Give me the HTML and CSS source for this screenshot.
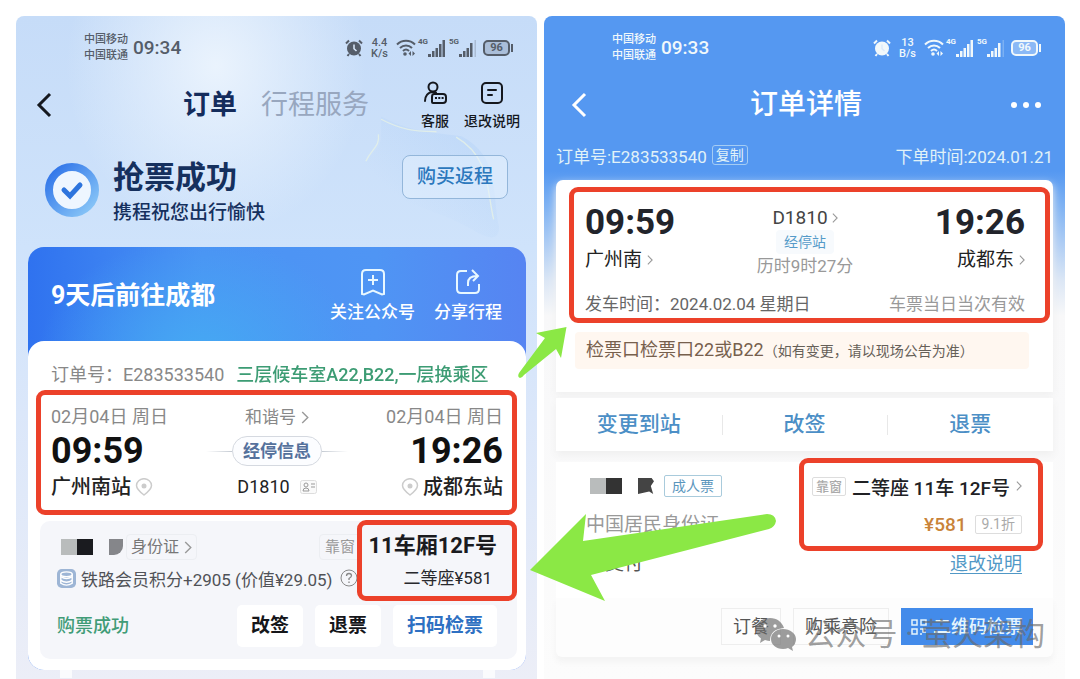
FILE: index.html
```html
<!DOCTYPE html>
<html lang="zh-CN">
<head>
<meta charset="utf-8">
<meta name="viewport" content="width=device-width, initial-scale=1">
<title>订单详情</title>
<link rel="stylesheet" href="styles.css">
</head>
<body>
<svg class="defs" aria-hidden="true">
  <symbol id="alarm" viewBox="0 0 18 18"><circle cx="9" cy="9.500" r="7" fill="currentColor"/><path d="M1 4.500 4 1.500M17 4.500 14 1.500M4 15l-1.500 2M14 15l1.500 2" stroke="currentColor" stroke-width="2"/><path class="hand" d="M9 5.500v4.200l2.500 2.300" fill="none" stroke-width="1.500"/></symbol>
  <symbol id="wifi" viewBox="0 0 20 18"><g fill="none" stroke="currentColor" stroke-width="2"><path d="M1 5.500c5-5 13-5 18 0M4 9c3.500-3.500 8.500-3.500 12 0M7 12c2-2 4-2 6 0"/></g><circle cx="9" cy="15" r="1.800" fill="currentColor"/><path d="m15 12-2.500 2.500L15 17zM16.500 12l2.500 2.500-2.500 2.500z" fill="currentColor"/></symbol>
  <symbol id="signal" viewBox="0 0 18 17"><path d="M0 14h3v3H0zM4 11h2.500v6H4zM7.500 8H10v9H7.500zM11 4h2.500v13H11zM14.500 0H17v17h-2.500z" fill="currentColor"/></symbol>
  <symbol id="signal4" viewBox="0 0 18 17"><path d="M0 14h3v3H0zM4 11h2.500v6H4zM7.500 8H10v9H7.500zM11 3h2.500v14H11z" fill="currentColor"/><path d="M15.500 0H17v17h-1.500z" fill="currentColor" opacity=".25"/></symbol>
  <symbol id="back" viewBox="0 0 16 26"><path d="M14 2 3 13l11 11" fill="none" stroke="currentColor" stroke-width="3"/></symbol>
  <symbol id="chev" viewBox="0 0 8 14"><path d="m1 1 6 6-6 6" fill="none" stroke="currentColor" stroke-width="1.500"/></symbol>
  <symbol id="pin" viewBox="0 0 18 18"><path d="M9 17C5 14 1.500 11 1.500 7.500a7.500 6.800 0 0 1 15 0C16.500 11 13 14 9 17z" fill="none" stroke="currentColor" stroke-width="1.500"/><circle cx="9" cy="8" r="2.500" fill="currentColor"/></symbol>
</svg>

<main class="board">
  <section class="phone phone-a">
    <svg class="petal" viewBox="0 0 170 150" aria-hidden="true"><defs><linearGradient id="leaf" x1="0" y1="1" x2="1" y2="0"><stop offset=".3" stop-color="#a9ccf7" stop-opacity="0"/><stop offset="1" stop-color="#a9ccf7" stop-opacity=".4"/></linearGradient></defs><path d="M28 4c35 18 60 18 90 22 42 22 34 60 42 102 0 16-12 12-24 6C80 100 20 100 6 60c4-10 22-17 22-33z" fill="url(#leaf)"/><path d="M28 7c25 13 38 13 62 14M112 27c38 22 34 58 42 92M25 24c2 14-8 16-14 30" fill="none" stroke="#e6f1e6" stroke-width="1.500" opacity=".8"/></svg>
    <div class="status">
      <div class="carrier"><span>中国移动</span><span>中国联通</span></div>
      <span class="clock">09:34</span>
      <div class="status-icons">
        <svg class="i-alarm"><use href="#alarm"/></svg>
        <span class="speed">4.4<br>K/s</span>
        <svg class="i-wifi"><use href="#wifi"/></svg>
        <span class="gen">4G</span><svg class="i-signal"><use href="#signal"/></svg>
        <span class="gen">5G</span><svg class="i-signal"><use href="#signal4"/></svg>
        <span class="battery">96</span>
      </div>
    </div>
    <header class="head-a">
      <button class="back" aria-label="返回"><svg><use href="#back"/></svg></button>
      <nav class="tabs"><button class="tab active">订单</button><button class="tab">行程服务</button></nav>
      <div class="tools">
        <button class="tool"><svg viewBox="0 0 26 26"><g fill="none" stroke="currentColor" stroke-width="2" stroke-linecap="round"><circle cx="11" cy="7" r="4.500"/><path d="M3 21c0-5 3-9 8-9 1.500 0 2.500.300 3 .800"/><path d="M12 14h9q3 0 3 3v3q0 3-3 3H11q-1 0-1-1v-5q0-3 2-3z"/></g><path d="M13 18h2M16.300 18h2M19.600 18h2" stroke="currentColor" stroke-width="2"/></svg><span>客服</span></button>
        <button class="tool"><svg viewBox="0 0 26 26"><g fill="none" stroke="currentColor" stroke-width="2" stroke-linecap="round"><rect x="3" y="3" width="20" height="20" rx="4"/><path d="M9 10h8M9 15h4"/></g></svg><span>退改说明</span></button>
      </div>
    </header>
    <div class="success">
      <svg class="tick" viewBox="0 0 54 54"><defs><linearGradient id="ring" x1="0" y1="0" x2="1" y2="1"><stop offset="0" stop-color="#2a6fe8"/><stop offset="1" stop-color="#8ecbf8"/></linearGradient></defs><circle cx="27" cy="27" r="23" fill="#eef6ff" stroke="url(#ring)" stroke-width="8"/><path d="m19 27 6 6 10-11" fill="none" stroke="#2d74dd" stroke-width="5" stroke-linecap="round"/></svg>
      <div class="success-text"><h1>抢票成功</h1><p>携程祝您出行愉快</p></div>
      <button class="return">购买返程</button>
    </div>
    <div class="trip">
      <div class="trip-head">
        <h2>9天后前往成都</h2>
        <div class="trip-tools">
          <button class="trip-tool"><svg viewBox="0 0 26 28"><g fill="none" stroke="currentColor" stroke-width="2"><path d="M6 2h14q4 0 4 4v20l-2 .500-9-4-9 4-2-.500V6q0-4 4-4z"/><path d="M13 7v10M8 12h10"/></g></svg><span>关注公众号</span></button>
          <button class="trip-tool"><svg viewBox="0 0 26 28"><path d="M12 3H6Q2 3 2 7v14q0 4 4 4h14q4 0 4-4v-5M13 18v-3q0-7 9-7M17 2l6 6-5 5" fill="none" stroke="currentColor" stroke-width="2"/></svg><span>分享行程</span></button>
        </div>
      </div>
      <div class="trip-body">
        <div class="order-line"><span>订单号：</span><span class="order-id">E283533540</span><span class="gate">三层候车室A22,B22,一层换乘区</span></div>
        <div class="route boxed">
          <div class="stop"><span class="date">02月04日 周日</span><strong>09:59</strong><span class="station">广州南站<svg class="pin"><use href="#pin"/></svg></span></div>
          <div class="train"><span class="kind">和谐号<svg class="chev"><use href="#chev"/></svg></span><div class="via"><button>经停信息</button></div><span class="number">D1810<svg class="idcard" viewBox="0 0 17 14"><rect x=".500" y=".500" width="16" height="13" rx="2" fill="#fafafa" stroke="#ddd"/><circle cx="6" cy="5" r="2" fill="none" stroke="#999"/><path d="M3 11q0-3 3-3t3 3zM11 4h4M11 7h4" fill="none" stroke="#999"/></svg></span></div>
          <div class="stop end"><span class="date">02月04日 周日</span><strong>19:26</strong><span class="station"><svg class="pin"><use href="#pin"/></svg>成都东站</span></div>
        </div>
        <div class="seat">
          <div class="person"><span class="redact"><i></i><i></i><i></i></span><button class="idtype">身份证<svg class="chev"><use href="#chev"/></svg></button><span class="window">靠窗</span></div>
          <div class="points"><svg class="coins" viewBox="0 0 20 20"><rect width="20" height="20" rx="5" fill="#9db5d5"/><g fill="#9db5d5" stroke="#fff" stroke-width="1.500"><path d="M4 5v10q6 4 12 0V5"/><path d="M4 8q6 4 12 0M4 12q6 4 12 0"/><ellipse cx="10" cy="5.500" rx="6" ry="2.500"/></g></svg><span>铁路会员积分+2905 (价值¥29.05)</span><svg class="help" viewBox="0 0 18 18"><circle cx="9" cy="9" r="8" fill="none" stroke="#888"/><path d="M6.500 7q0-2.500 2.500-2.500t2.500 2.300Q11.500 8 9 9.500V11M9 12.500V14" fill="none" stroke="#888" stroke-width="1.300"/></svg></div>
          <div class="done"><span>购票成功</span><button>改签</button><button>退票</button><button class="scan">扫码检票</button></div>
          <div class="seat-box"><b>11车厢12F号</b><span>二等座¥581</span></div>
        </div>
      </div>
    </div>
    <div class="hooks"><i></i><i></i></div>
  </section>

  <section class="phone phone-b">
    <div class="status">
      <div class="carrier"><span>中国移动</span><span>中国联通</span></div>
      <span class="clock">09:33</span>
      <div class="status-icons">
        <svg class="i-alarm"><use href="#alarm"/></svg>
        <span class="speed">13<br>B/s</span>
        <svg class="i-wifi"><use href="#wifi"/></svg>
        <span class="gen">4G</span><svg class="i-signal"><use href="#signal"/></svg>
        <span class="gen">5G</span><svg class="i-signal"><use href="#signal4"/></svg>
        <span class="battery">96</span>
      </div>
    </div>
    <header class="head-b">
      <button class="back" aria-label="返回"><svg><use href="#back"/></svg></button>
      <h1>订单详情</h1>
      <button class="more" aria-label="更多"><i></i><i></i><i></i></button>
    </header>
    <div class="order-b"><span>订单号:E283533540</span><button>复制</button><span class="placed">下单时间:2024.01.21</span></div>
    <div class="sheet">
      <div class="journey boxed">
        <div class="legs">
          <div class="leg"><strong>09:59</strong><span>广州南<svg class="chev"><use href="#chev"/></svg></span></div>
          <div class="middle"><span class="no">D1810<svg class="chev"><use href="#chev"/></svg></span><a href="#stops">经停站</a><span class="span">历时9时27分</span></div>
          <div class="leg end"><strong>19:26</strong><span>成都东<svg class="chev"><use href="#chev"/></svg></span></div>
        </div>
        <div class="depart"><span>发车时间：<span class="when">2024.02.04 星期日</span></span><span class="valid">车票当日当次有效</span></div>
      </div>
      <div class="gate-note">检票口检票口22或B22<small>（如有变更，请以现场公告为准）</small></div>
    </div>
    <div class="actions"><button>变更到站</button><button>改签</button><button>退票</button></div>
    <div class="passenger">
      <div class="who">
        <div class="name"><span class="redact dark"><i></i><i></i><i></i></span><span class="adult">成人票</span></div>
        <span class="doc">中国居民身份证</span>
        <span class="paid">已支付</span>
      </div>
      <div class="fare">
        <div class="fare-seat"><small>靠窗</small><span>二等座 11车 12F号</span><svg class="chev"><use href="#chev"/></svg></div>
        <div class="price"><b>¥581</b><small>9.1折</small></div>
        <a href="#rules">退改说明</a>
        <i class="fare-frame"></i>
      </div>
    </div>
    <div class="foot"><button>订餐</button><button>购乘意险</button><button class="qr"><svg viewBox="0 0 16 16"><g fill="none" stroke="currentColor" stroke-width="1.500"><path d="M1 1h5v5H1zM10 1h5v5h-5zM1 10h5v5H1z"/><path d="M9 10h3v3h3M9 15h2M14 9v2"/></g></svg>二维码检票</button></div>

    <svg class="arrow arrow-up" viewBox="0 0 52 54" aria-hidden="true"><path d="M49.500 1 19 7l9 5L2 47q-2 4 1 5 2 0 4-3l32-26 5 9z" fill="#8be845"/></svg>
    <svg class="arrow arrow-left" viewBox="0 0 248 90" aria-hidden="true"><path d="M0 57 56 1l-3 27L237 1q8 0 9 7-1 6-7 8L61 62l14 26z" fill="#8be845"/></svg>
    <div class="watermark"><svg viewBox="0 0 40 34"><g fill="currentColor"><path d="M14 0C6 0 0 5 0 11.500c0 4 2 7 5 9L4 25l5-3q3 1 5 1 0-12 14-13C26 4 21 0 14 0z"/><path d="M27 11c-7 0-12 4.500-12 10s5 10 12 10q3 0 5-1l5 3-1-4q4-3 4-8c0-5.500-6-10-13-10z"/></g><g fill="#fff"><circle cx="9" cy="8" r="1.700"/><circle cx="19" cy="8" r="1.700"/><circle cx="23" cy="18" r="1.500"/><circle cx="32" cy="18" r="1.500"/></g></svg><span>公众号 · 萤火架构</span></div>
  </section>
</main>
</body>
</html>
```
FILE: styles.css
```css
* { box-sizing: border-box; margin: 0; padding: 0; }
body { background: #fff; font-family: Roboto, "Noto Sans CJK SC", sans-serif; color: #222; }
button { border: 0; background: none; font: inherit; color: inherit; white-space: nowrap; }
h1, h2 { font-weight: 700; }
span, small, b { white-space: nowrap; }
svg { display: block; flex: none; }
i { display: block; }
.defs { display: none; }

.board { display: grid; grid-template-columns: 1fr 1fr; gap: 7px; min-height: 100vh; padding: 16px 15px 0 16px; overflow: hidden; }
.phone { position: relative; min-width: 0; border-radius: 8px 8px 0 0; }
.phone-a { background: radial-gradient(ellipse 150px 170px at 200px 50px, #eaf3fd, rgba(234, 243, 253, 0)), linear-gradient(#c6dcf8, #cfe3fb 35%, #dbe7fa 60%, #eceef7); }
.phone-b { background: linear-gradient(#5598f1 0, #5598f1 155px, #79aff3 185px, #dce7f5 265px, #f8f8f9 300px, #fcfcfc); }
.petal { position: absolute; right: 20px; top: 97px; width: 170px; height: 134px; }

/* status bar */
.status { position: relative; display: flex; align-items: center; gap: 5px; height: 64px; padding: 0 24px 0 68px; color: #555d69; }
.phone-b .status { color: #f1f8fb; }
.carrier { display: grid; font-size: 11px; line-height: 16px; font-weight: 500; }
.clock { font-size: 19px; line-height: 32px; font-weight: 500; }
.status-icons { display: flex; align-items: center; margin-left: auto; }
.i-alarm { width: 18px; height: 18px; margin-right: 8px; }
.hand { stroke: #dceafb; }
.phone-b .hand { stroke: #5598f1; }
.speed { font-size: 11px; line-height: 11px; font-weight: 500; text-align: center; margin-right: 8px; }
.i-wifi { width: 20px; height: 18px; margin-right: 2px; }
.gen { font-size: 8px; line-height: 10px; font-weight: 700; align-self: flex-start; }
.i-signal { width: 18px; height: 17px; margin-right: 3px; }
.battery { position: relative; width: 27px; margin: 0 3px 0 3px; border: 2px solid currentColor; border-radius: 5px; font-size: 11px; line-height: 12px; font-weight: 700; text-align: center; background: rgba(128, 145, 170, .4); }
.phone-b .battery { background: rgba(220, 235, 255, .4); }
.battery::after { content: ""; position: absolute; right: -5px; top: 2px; width: 2px; height: 8px; background: currentColor; }

.back svg { width: 16px; height: 26px; }
.chev { width: 8px; height: 13px; color: #999; }

/* left header */
.head-a { position: relative; display: flex; align-items: center; height: 50px; padding: 0 17px 0 20px; color: #15181e; }
.tabs { display: flex; gap: 24px; margin-left: 131px; }
.tab { font-size: 27px; line-height: 40px; color: #98a7bf; }
.tab.active { font-weight: 700; color: #142c5c; }
.tools { display: flex; gap: 15px; margin-left: auto; }
.tool { display: grid; justify-items: center; gap: 5px; font-size: 14px; line-height: 20px; font-weight: 500; }
.tool svg { width: 26px; height: 26px; }

.success { position: relative; display: flex; align-items: flex-start; height: 117px; padding: 25px 29px 0; }
.tick { width: 54px; height: 54px; margin-top: 8px; }
.success-text { margin-left: 14px; color: #15305e; }
.success-text h1 { font-size: 31px; line-height: 46px; }
.success-text p { font-size: 19px; line-height: 24px; font-weight: 500; }
.return { margin-left: auto; padding: 0 14px; border: 1px solid #93b6da; border-radius: 8px; background: rgba(232, 243, 255, .45); font-size: 19px; line-height: 42px; font-weight: 500; color: #2c78bd; }

/* left trip card */
.trip { position: relative; margin: 0 11px 0 12px; border-radius: 16px; background: radial-gradient(ellipse 160px 120px at 170px 110px, #45a9f3, rgba(69, 169, 243, 0)), linear-gradient(90deg, #2f72ef, #4b93f4 35%, #4f95f4 70%, #5684f2); }
.trip-head { display: flex; justify-content: space-between; align-items: center; height: 94px; padding: 4px 24px 0 23px; color: #fff; }
.trip-head h2 { font-size: 25px; line-height: 32px; }
.trip-tools { display: flex; gap: 19px; }
.trip-tool { display: grid; justify-items: center; gap: 4px; font-size: 17px; line-height: 24px; font-weight: 500; }
.trip-tool svg { width: 26px; height: 28px; color: #e8f8ff; }
.trip-body { padding: 20px 9px 11px 12px; border-radius: 16px; background: #fff; }
.order-line { display: flex; padding: 0 6px 0 11px; font-size: 18px; line-height: 28px; color: #888; }
.order-id { margin-right: 12px; }
.gate { flex: 1; min-width: 0; overflow: hidden; font-weight: 500; color: #3d9c74; -webkit-mask-image: linear-gradient(90deg, #000 90%, transparent); mask-image: linear-gradient(90deg, #000 90%, transparent); }
.boxed { border: 5px solid #ec412a; border-radius: 9px; }
.route { display: grid; grid-template-columns: 1fr 110px 1fr; margin: 1px 0 0 -4px; padding: 8px 9px 7px 10px; }
.stop { display: flex; flex-direction: column; align-items: flex-start; }
.stop.end { align-items: flex-end; }
.date, .kind { font-size: 17px; line-height: 28px; color: #888; }
.date { font-size: 18px; }
.stop strong { font-size: 36px; line-height: 40px; color: #111; }
.station { display: flex; align-items: center; gap: 4px; font-size: 20px; line-height: 32px; font-weight: 500; color: #222; }
.pin { width: 18px; height: 18px; color: #ccc; }
.train { display: flex; flex-direction: column; align-items: center; }
.kind, .number { display: flex; align-items: center; gap: 5px; }
.via { display: flex; align-items: center; height: 40px; }
.via::before, .via::after { content: ""; width: 26px; height: 1px; background: linear-gradient(90deg, transparent, #c5cbd3); }
.via::after { background: linear-gradient(90deg, #c5cbd3, transparent); }
.via button { padding: 0 10px; border: 1px solid #d5d9e0; border-radius: 15px; background: #fcfdff; font-size: 17px; line-height: 28px; font-weight: 700; color: #55719c; }
.number { gap: 10px; font-size: 18px; line-height: 32px; }
.idcard { width: 17px; height: 14px; }

.seat { position: relative; margin-top: 6px; padding: 10px 20px 12px 17px; border-radius: 10px; background: #f5f6fa; }
.person { display: flex; align-items: center; height: 32px; padding-left: 4px; }
.redact { display: flex; }
.redact i { width: 16px; height: 16px; background: #b9bcbc; }
.redact i:nth-child(2) { background: #1a1b1f; }
.redact i:nth-child(3) { width: 14px; margin-left: 16px; background: #85868a; border-radius: 0 0 9px 0; }
.redact.dark i:nth-child(2) { background: #333; }
.redact.dark i:nth-child(3) { width: 16px; background: #444; clip-path: polygon(0 0, 85% 0, 100% 20%, 80% 50%, 95% 100%, 70% 85%, 0 100%); border-radius: 0; }
.idtype { display: flex; align-items: center; gap: 5px; margin-left: 3px; padding: 0 4px; border: 1px solid #eceef2; border-radius: 4px; font-size: 16px; line-height: 24px; color: #777; }
.window { margin-left: 122px; padding: 0 5px; border: 1px solid #eceef2; border-radius: 4px; font-size: 15px; line-height: 24px; color: #999; }
.points { display: flex; align-items: center; height: 30px; font-size: 17px; color: #505257; }
.coins { width: 19px; height: 19px; margin-right: 5px; }
.help { width: 18px; height: 18px; margin-left: 8px; }
.done { display: flex; align-items: center; gap: 12px; margin-top: 12px; font-size: 18px; line-height: 42px; color: #419c77; }
.done span { margin-right: auto; font-weight: 500; }
.done button { padding: 0 14px; border-radius: 5px; background: #fff; font-size: 19px; font-weight: 700; color: #15161a; }
.done .scan { color: #2e70c2; }
.seat-box { position: absolute; right: 0; top: -1px; display: grid; justify-items: end; width: 160px; padding: 5px 15px 2px 0; border: 5px solid #ec412a; border-radius: 9px; background: #f5f6fa; }
.seat-box b { font-size: 22px; line-height: 32px; color: #1a1b1f; }
.seat-box span { padding-right: 5px; font-size: 17px; line-height: 32px; color: #28292d; }
.hooks { display: flex; justify-content: space-between; padding: 0 42px 0 44px; }
.hooks i { width: 12px; height: 8px; background: #fafbfd; }

/* right header */
.head-b { display: grid; grid-template-columns: 1fr auto 1fr; align-items: center; height: 50px; padding: 0 24px 0 27px; color: #fff; }
.head-b .back { justify-self: start; }
.head-b h1 { font-size: 28px; line-height: 40px; font-weight: 500; }
.more { display: flex; gap: 6px; justify-self: end; }
.more i { width: 6px; height: 6px; border-radius: 50%; background: #fff; }
.order-b { display: flex; align-items: center; gap: 5px; height: 50px; padding: 0 12px; font-size: 17px; color: #e1f2f8; }
.order-b button { padding: 0 3px; border: 1px solid #a4ccf4; border-radius: 3px; font-size: 14px; line-height: 18px; }
.placed { margin-left: auto; }

.sheet { margin: 0 12px; padding: 7px 3px 23px 13px; border-radius: 7px 7px 0 0; background: #fff; box-shadow: 0 4px 8px #f0f0f0; }
.journey { padding: 14px 20px 0 11px; }
.legs { display: flex; justify-content: space-between; }
.leg { display: flex; flex-direction: column; }
.leg.end { align-items: flex-end; }
.leg strong { font-size: 35px; line-height: 33px; color: #22242b; }
.leg span { display: flex; align-items: center; gap: 5px; font-size: 19px; line-height: 42px; }
.leg .chev, .middle .chev { width: 6px; height: 10px; }
.middle { display: grid; justify-items: center; align-content: start; }
.no { display: flex; align-items: center; gap: 4px; font-size: 19px; line-height: 24px; color: #444; }
.middle a { padding: 0 8px; border-radius: 4px; background: #f7fafd; font-size: 14px; line-height: 24px; color: #559ac9; text-decoration: none; }
.span { font-size: 17px; line-height: 24px; color: #999; }
.depart { display: flex; justify-content: space-between; margin-top: 10px; font-size: 17px; line-height: 27px; color: #666; }
.valid { color: #999; }
.gate-note { margin: 9px 21px 0 6px; padding-left: 11px; border-radius: 4px; background: #fff7f0; font-size: 18px; line-height: 35px; color: #77604d; }
.gate-note small { font-size: 14px; color: #666058; }

.actions { display: grid; grid-template-columns: 1fr 1fr 1fr; margin: 6px 12px 0; background: #fff; box-shadow: 0 4px 8px #efefef; font-size: 21px; line-height: 53px; font-weight: 500; color: #4c8fc6; }
.actions button + button { background: linear-gradient(#e8e8e8, #e8e8e8) left center / 1px 20px no-repeat; }

.passenger { display: flex; justify-content: space-between; margin: 11px 12px 0; padding: 0 31px 0 30px; min-height: 136px; background: #fff; }
.name { display: flex; align-items: center; gap: 10px; height: 48px; padding-left: 4px; }
.adult { padding: 0 7px; border: 1px solid #a9cbdc; border-radius: 2px; font-size: 14px; line-height: 20px; color: #5b96bd; }
.who { display: grid; align-content: start; font-size: 19px; }
.doc { line-height: 29px; color: #999; }
.paid { line-height: 50px; color: #555; }
.fare { position: relative; display: flex; flex-direction: column; align-items: flex-end; }
.fare-frame { position: absolute; inset: -4px -21px auto -13px; height: 93px; border: 5px solid #ec412a; border-radius: 9px; }
.fare small { padding: 0 3px; border: 1px solid #ddd; border-radius: 2px; font-size: 13px; line-height: 17px; color: #aaa; }
.fare-seat { display: flex; align-items: center; gap: 6px; height: 48px; font-size: 19px; font-weight: 500; color: #202124; }
.fare-seat .chev { width: 6px; height: 10px; }
.price { display: flex; align-items: center; gap: 8px; height: 29px; }
.price b { font-size: 19px; font-weight: 500; color: #c98339; }
.price small { padding: 0 6px; font-size: 14px; }
.fare a { font-size: 18px; line-height: 50px; color: #5198c6; text-underline-offset: 3px; }

.foot { display: flex; justify-content: flex-end; gap: 12px; margin: 0 12px; padding: 10px 20px 12px; border-radius: 0 0 6px 6px; background: #fdfdfd; box-shadow: 0 5px 6px #f3f3f3; }
.foot button { padding: 0 11px; border: 1px solid #eee; font-size: 18px; line-height: 35px; color: #555; }
.foot .qr { display: flex; align-items: center; gap: 6px; padding: 0 9px; border-color: #438bea; background: #438bea; color: #e6f5fc; font-weight: 500; }
.qr svg { width: 16px; height: 16px; }

/* annotations over both phones */
.arrow { position: absolute; }
.arrow-up { left: -27px; top: 310px; width: 52px; height: 54px; }
.arrow-left { left: -14px; top: 497px; width: 248px; height: 90px; }
.watermark { position: absolute; right: 20px; top: 598px; display: flex; align-items: center; gap: 9px; font-size: 31px; line-height: 42px; color: rgba(105, 105, 105, .65); }
.watermark svg { width: 40px; height: 34px; }
```
